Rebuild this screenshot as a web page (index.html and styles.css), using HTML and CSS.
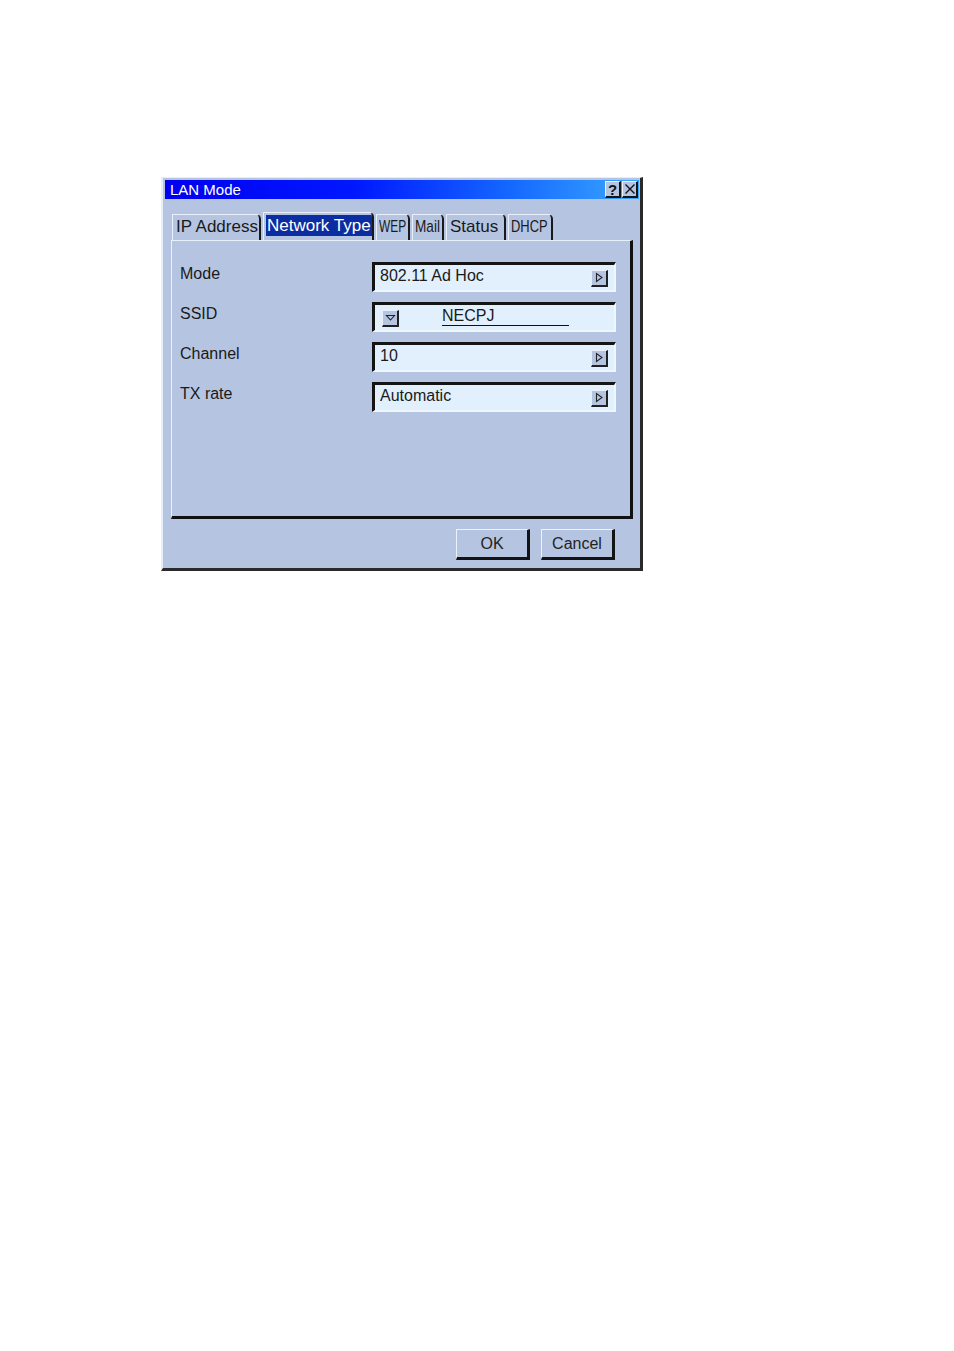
FILE: index.html
```html
<!DOCTYPE html>
<html>
<head>
<meta charset="utf-8">
<title>LAN Mode</title>
<link rel="stylesheet" href="styles.css">
</head>
<body>
<div class="dialog">
  <div class="titlebar">
    <span class="title">LAN Mode</span>
    <div class="title-buttons">
      <span class="tbtn">?</span>
      <span class="tbtn">
        <svg width="12" height="12" viewBox="0 0 12 12"><path d="M1.5 1.5 L10.5 10.5 M10.5 1.5 L1.5 10.5" stroke="#111" stroke-width="1.4" fill="none"/></svg>
      </span>
    </div>
  </div>

  <div class="tabs">
    <div class="tab tab-ip"><span class="txt">IP Address</span></div>
    <div class="tab tab-net active"><span class="sel">Network Type</span></div>
    <div class="tab tab-wep"><span class="txt">WEP</span></div>
    <div class="tab tab-mail"><span class="txt">Mail</span></div>
    <div class="tab tab-status"><span class="txt">Status</span></div>
    <div class="tab tab-dhcp"><span class="txt">DHCP</span></div>
  </div>

  <div class="panel">
    <div class="row">
      <span class="label">Mode</span>
      <div class="field">
        <span class="value">802.11 Ad Hoc</span>
        <span class="mini">
          <svg width="10" height="11" viewBox="0 0 10 11"><path d="M2.5 1.5 L2.5 9.5 L8 5.5 Z" stroke="#222" stroke-width="1.1" fill="none"/></svg>
        </span>
      </div>
    </div>
    <div class="row">
      <span class="label">SSID</span>
      <div class="field field-ssid">
        <span class="mini mini-drop">
          <svg width="11" height="10" viewBox="0 0 11 10"><path d="M1.5 2.5 L9.5 2.5 L5.5 7 Z" stroke="#222" stroke-width="1.1" fill="none"/></svg>
        </span>
        <span class="ssid">NECPJ</span>
      </div>
    </div>
    <div class="row">
      <span class="label">Channel</span>
      <div class="field">
        <span class="value">10</span>
        <span class="mini">
          <svg width="10" height="11" viewBox="0 0 10 11"><path d="M2.5 1.5 L2.5 9.5 L8 5.5 Z" stroke="#222" stroke-width="1.1" fill="none"/></svg>
        </span>
      </div>
    </div>
    <div class="row">
      <span class="label">TX rate</span>
      <div class="field">
        <span class="value">Automatic</span>
        <span class="mini">
          <svg width="10" height="11" viewBox="0 0 10 11"><path d="M2.5 1.5 L2.5 9.5 L8 5.5 Z" stroke="#222" stroke-width="1.1" fill="none"/></svg>
        </span>
      </div>
    </div>
  </div>

  <div class="buttons">
    <div class="btn">OK</div>
    <div class="btn">Cancel</div>
  </div>
</div>
</body>
</html>
```

FILE: styles.css
```css
html, body {
  margin: 0;
  padding: 0;
  background: #ffffff;
}

body {
  font-family: "Liberation Sans", Arial, sans-serif;
  color: #1a1a1a;
}

.dialog {
  margin: 177px 0 0 161px;
  width: 482px;
  height: 394px;
  box-sizing: border-box;
  background: #b5c5e1;
  border-style: solid;
  border-width: 1px 3px 3px 2px;
  border-color: #e6eefa #2a2a2a #2a2a2a #e6eefa;
  display: flex;
  flex-direction: column;
}

.titlebar {
  margin: 2px 1px 0 2px;
  height: 19px;
  background: linear-gradient(90deg, #0000f0 0%, #0018ff 40%, #1466ff 72%, #3aa6ff 100%);
  display: flex;
  align-items: center;
  justify-content: space-between;
}

.title {
  color: #ffffff;
  font-size: 15px;
  padding-left: 5px;
  line-height: 19px;
}

.title-buttons {
  display: flex;
  gap: 1px;
  align-self: stretch;
  padding: 1px 1px 1px 0;
}

.tbtn {
  width: 16px;
  box-sizing: border-box;
  background: #b5c5e1;
  border-style: solid;
  border-width: 1px 2px 2px 1px;
  border-color: #eef4fc #151515 #151515 #eef4fc;
  display: flex;
  align-items: center;
  justify-content: center;
  font-size: 15px;
  font-weight: bold;
  line-height: 1;
  color: #111;
}

.tabs {
  display: flex;
  align-items: flex-end;
  gap: 2px;
  margin: 13px 0 0 9px;
  height: 28px;
}

.tab {
  box-sizing: border-box;
  height: 26px;
  border-style: solid;
  border-width: 1px 2px 0 1px;
  border-color: #e9f0fb #1a1a1a transparent #e9f0fb;
  border-top-right-radius: 5px;
  font-size: 17px;
  line-height: 24px;
  padding: 0 2px 0 3px;
  white-space: nowrap;
  overflow: hidden;
}

.txt {
  display: inline-block;
  transform-origin: left center;
}

.tab-ip { width: 89px; }
.tab-net { width: 111px; }
.tab-wep { width: 34px; padding-left: 2px; }
.tab-mail { width: 32px; padding-left: 2px; }
.tab-status { width: 60px; }
.tab-dhcp { width: 45px; padding-left: 2px; }

.tab-wep .txt { transform: scaleX(0.7); }
.tab-mail .txt { transform: scaleX(0.8); }
.tab-dhcp .txt { transform: scaleX(0.76); }

.tab.active {
  height: 28px;
  line-height: 26px;
  padding-left: 2px;
}

.sel {
  background: #0b2da2;
  color: #ffffff;
  padding: 1px 1px;
}

.panel {
  margin: 0 7px 0 8px;
  height: 279px;
  box-sizing: border-box;
  border-style: solid;
  border-width: 1px 3px 3px 1px;
  border-color: #e9f0fb #111111 #111111 #e9f0fb;
  padding: 21px 14px 0 8px;
  display: flex;
  flex-direction: column;
  gap: 10px;
}

.row {
  display: flex;
  justify-content: space-between;
  align-items: center;
  height: 30px;
}

.label {
  font-size: 16px;
  position: relative;
  top: -3px;
}

.field {
  width: 244px;
  height: 30px;
  box-sizing: border-box;
  background: #e1f0fc;
  border-style: solid;
  border-width: 3px 2px 2px 3px;
  border-color: #141414 #eef6fe #eef6fe #141414;
  display: flex;
  align-items: center;
  justify-content: space-between;
  padding: 0 6px 0 5px;
}

.value {
  font-size: 16px;
  line-height: 20px;
  margin-top: -3px;
}

.mini {
  width: 17px;
  height: 17px;
  box-sizing: border-box;
  background: #b5c5e1;
  border-style: solid;
  border-width: 1px 2px 2px 1px;
  border-color: #e9f0fb #202020 #202020 #e9f0fb;
  display: flex;
  align-items: center;
  justify-content: center;
  margin-top: 1px;
}

.field-ssid {
  justify-content: flex-start;
  padding-left: 7px;
}

.mini-drop {
  align-items: flex-start;
  padding-top: 2px;
}

.ssid {
  font-size: 16px;
  line-height: 18px;
  width: 127px;
  margin-left: 43px;
  border-bottom: 1px solid #111;
  margin-top: -2px;
}

.buttons {
  display: flex;
  justify-content: flex-end;
  gap: 11px;
  margin: 10px 25px 0 0;
}

.btn {
  width: 74px;
  height: 31px;
  box-sizing: border-box;
  border-style: solid;
  border-width: 1px 3px 3px 1px;
  border-color: #eaf2fc #141414 #141414 #eaf2fc;
  font-size: 16px;
  display: flex;
  align-items: center;
  justify-content: center;
  color: #222;
}
```
